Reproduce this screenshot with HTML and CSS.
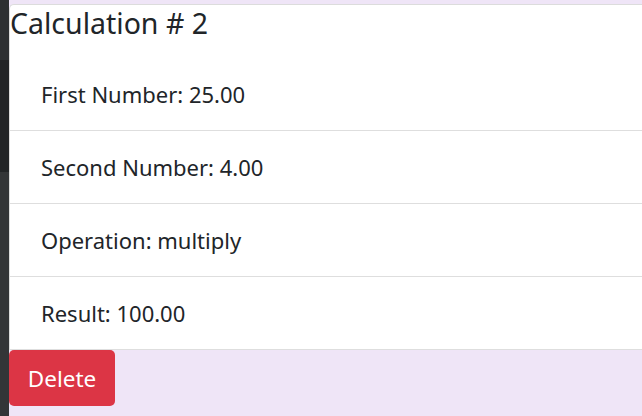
FILE: index.html
```html
<!DOCTYPE html>
<html>
<head>
<meta charset="utf-8">
<link rel="stylesheet" href="styles.css">
</head>
<body>
<div class="page">
  <aside class="side">
    <div class="side-top"></div>
    <div class="side-mid"></div>
    <div class="side-bot"></div>
  </aside>
  <main class="main">
    <section class="card">
      <h3 class="title">Calculation # 2</h3>
      <ul class="list">
        <li class="item">First Number: 25.00</li>
        <li class="item">Second Number: 4.00</li>
        <li class="item">Operation: multiply</li>
        <li class="item">Result: 100.00</li>
      </ul>
    </section>
    <button class="btn-delete">Delete</button>
  </main>
</div>
</body>
</html>
```
FILE: styles.css
```css
html, body {
  margin: 0;
  padding: 0;
  height: 100%;
}
body {
  font-family: "Noto Sans", "Open Sans", sans-serif;
  color: #212529;
  background: #efe5f7;
  overflow: hidden;
}
.page {
  display: flex;
  height: 416px;
}
.side {
  width: 9px;
  flex: none;
  display: flex;
  flex-direction: column;
  background: #333537;
}
.side-top { height: 60px; background: #2e3032; }
.side-mid { height: 112px; background: #222426; }
.side-bot { flex: 1; background: #333537; }
.main {
  flex: 1;
  padding-top: 4px;
  background: #efe5f7;
}
.card {
  background: #fff;
  border-left: 1px solid #dcdcdc;
  border-top: 1px solid #dcdcdc;
  border-top-left-radius: 5px;
}
.title {
  margin: 0;
  padding: 0;
  font-size: 28.5px;
  font-weight: 400;
  line-height: 36px;
  height: 53px;
}
.list {
  list-style: none;
  margin: 0;
  padding: 0;
}
.item {
  font-size: 22px;
  line-height: 26px;
  padding: 23px 31px 23px 31px;
  border-bottom: 1px solid #dedede;
}
.btn-delete {
  display: block;
  margin: 0;
  height: 56px;
  width: 106px;
  border: none;
  border-radius: 5px;
  background: #dc3545;
  color: #fff;
  font-family: "Noto Sans", "Open Sans", sans-serif;
  font-size: 22.5px;
  padding: 0;
}
```
